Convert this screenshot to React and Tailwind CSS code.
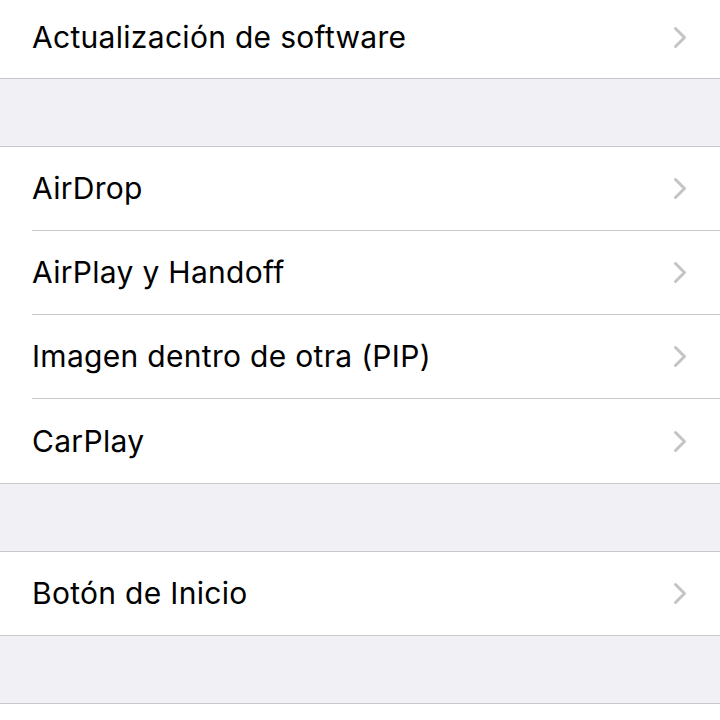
import React from "react";

const groups = [
  { rows: ["Actualización de software"], rowH: "h-[78px] pb-[4px]" },
  { rows: ["AirDrop", "AirPlay y Handoff", "Imagen dentro de otra (PIP)", "CarPlay"], rowH: "h-[84px]" },
  { rows: ["Botón de Inicio"], rowH: "h-[83px]" },
  { rows: [] },
];

const Chevron = () => (
  <svg width="14" height="23" viewBox="0 0 14 23" fill="none">
    <path d="M2.5 2.5 L11.5 11.5 L2.5 20.5" stroke="#c4c4c7" strokeWidth="3" strokeLinecap="round" strokeLinejoin="round" />
  </svg>
);

const Row = ({ label, last, rowH }) => (
  <div className="pl-[32px] bg-white">
    <div
      className={`flex items-center justify-between pr-[33px] ${rowH} ${
        last ? "" : "border-b border-[#c8c7cc]"
      }`}
    >
      <span className="text-[30px] text-black tracking-[0.3px]">{label}</span>
      <Chevron />
    </div>
  </div>
);

export default function App() {
  return (
    <div
      className="w-[720px] h-[720px] overflow-hidden bg-[#f1f1f5]"
      style={{ fontFamily: "Inter, 'Noto Sans', sans-serif" }}
    >
      {groups.map((g, gi) => (
        <div key={gi} className={gi === 0 ? "" : "pt-[67px]"}>
          <div
            className={`bg-white border-[#c8c7cc] ${gi === 0 ? "border-b" : "border-y"} ${
              g.rows.length === 0 ? "h-[40px]" : ""
            }`}
          >
            {g.rows.map((r, ri) => (
              <Row key={r} label={r} rowH={g.rowH} last={ri === g.rows.length - 1} />
            ))}
          </div>
        </div>
      ))}
    </div>
  );
}
